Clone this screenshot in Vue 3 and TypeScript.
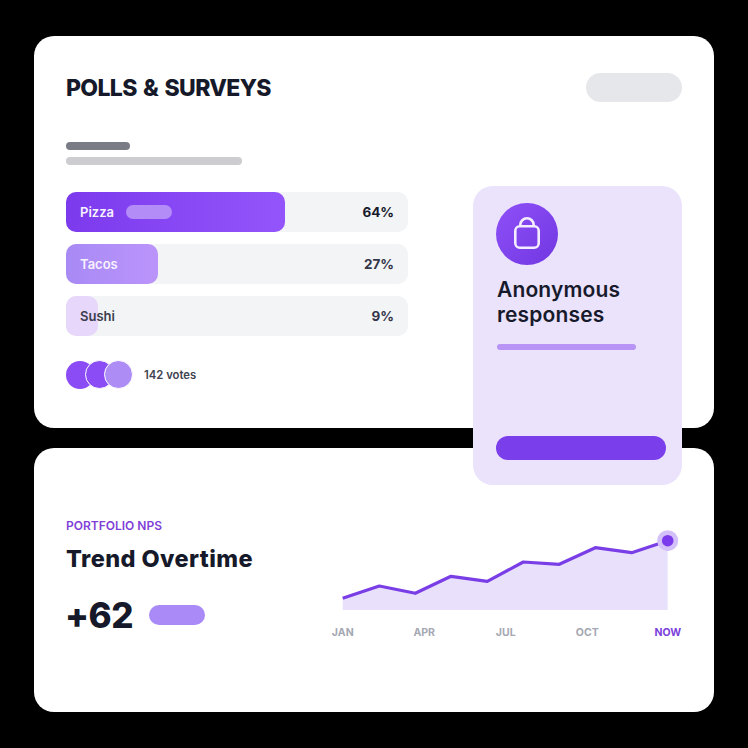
<script setup lang="ts">
const polls = [
  { name: 'Pizza', value: '64%', width: 219, cls: 'first' },
  { name: 'Tacos', value: '27%', width: 92, cls: 'second' },
  { name: 'Sushi', value: '9%', width: 32, cls: 'third' },
]
const months = ['JAN', 'APR', 'JUL', 'OCT', 'NOW']
const pts = '12.7,73.3 49.3,61 85.3,68.3 121,51.3 157.3,56.3 193.3,37 229.3,39.3 265.3,22.7 301.7,27.7 337.7,15.7'
</script>

<template>
  <main class="page">
    <section class="card top">
      <header class="head">
        <h1>POLLS &amp; SURVEYS</h1>
        <div class="pill-grey"></div>
      </header>
      <div class="line-dark"></div>
      <div class="line-light"></div>
      <div class="polls">
        <div v-for="p in polls" :key="p.name" class="row">
          <div class="fill" :class="p.cls" :style="{ width: p.width + 'px' }"></div>
          <span class="name" :class="p.cls">{{ p.name }}</span>
          <span v-if="p.cls === 'first'" class="chip"></span>
          <span class="val" :class="p.cls">{{ p.value }}</span>
        </div>
      </div>
      <div class="votes">
        <div class="avatars">
          <i class="av a1"></i><i class="av a2"></i><i class="av a3"></i>
        </div>
        <span>142 votes</span>
      </div>
    </section>

    <section class="card bottom">
      <div class="left">
        <div class="eyebrow">PORTFOLIO NPS</div>
        <h2>Trend Overtime</h2>
        <div class="score">
          <strong>+62</strong>
          <span class="score-pill"></span>
        </div>
      </div>
      <div class="chart">
        <svg width="350" height="90" viewBox="0 0 350 90">
          <polygon :points="pts + ' 337.7,85 12.7,85'" fill="#e9e1fc" />
          <polyline :points="pts" fill="none" stroke="#7a3ee6" stroke-width="3.2" stroke-linejoin="round" />
          <circle cx="337.7" cy="15.7" r="10.5" fill="#d3c0f8" />
          <circle cx="337.7" cy="15.7" r="5.8" fill="#7c3aed" />
        </svg>
        <div class="months">
          <span v-for="m in months" :key="m" :class="{ now: m === 'NOW' }">{{ m }}</span>
        </div>
      </div>
    </section>

    <aside class="float">
      <div class="lock">
        <svg width="30" height="36" viewBox="0 0 30 36" fill="none" stroke="#f3edff" stroke-width="2.6">
          <rect x="3.3" y="10.3" width="23.4" height="21.4" rx="4.5" />
          <path d="M8.3 10.3V9a6.7 6.7 0 0 1 13.4 0v1.3" />
        </svg>
      </div>
      <h3>Anonymous<br />responses</h3>
      <div class="float-line"></div>
      <div class="float-btn"></div>
    </aside>
  </main>
</template>

<style>
html, body { margin: 0; background: #000; }
</style>

<style scoped>
.page {
  position: relative;
  box-sizing: border-box;
  width: 748px;
  height: 748px;
  padding: 36px 34px;
  display: flex;
  flex-direction: column;
  gap: 20px;
  background: #000;
  font-family: Inter, "Liberation Sans", sans-serif;
  color: #171a2b;
}
.card { background: #fff; border-radius: 20px; box-sizing: border-box; }
.top { height: 392px; padding: 37px 32px 0; }
.head { display: flex; justify-content: space-between; align-items: center; height: 29px; }
h1 { margin: 0; font-size: 23px; font-weight: 800; letter-spacing: -0.65px; word-spacing: 2px; color: #151929; }
.pill-grey { width: 96px; height: 29px; border-radius: 15px; background: #e5e7eb; }
.line-dark { width: 64px; height: 8px; border-radius: 4px; background: #7a7c85; margin-top: 40px; }
.line-light { width: 176px; height: 8px; border-radius: 4px; background: #cdcdd1; margin-top: 7px; }
.polls { display: flex; flex-direction: column; gap: 12px; margin-top: 27px; width: 342px; }
.row {
  position: relative;
  height: 40px;
  border-radius: 10px;
  background: #f3f4f6;
  display: flex;
  align-items: center;
  padding: 0 14px;
  font-size: 13px;
  font-weight: 600;
}
.fill { position: absolute; left: 0; top: 0; bottom: 0; border-radius: 10px; }
.fill.first { background: linear-gradient(90deg, #7c3aed, #9355fb); }
.fill.second { background: linear-gradient(90deg, #a88af5, #bb94fb); }
.fill.third { background: #e7d7fb; }
.name { position: relative; color: #f7f2ff; }
.name.third { color: #3a3d4d; }
.chip { position: relative; width: 46px; height: 14px; border-radius: 7px; background: #b48cf8; margin-left: 12px; }
.val { position: relative; margin-left: auto; font-size: 13.5px; font-weight: 700; color: #34374a; }
.val.first { color: #171a2b; }
.votes { display: flex; align-items: center; gap: 11px; margin-top: 24px; font-size: 11.3px; font-weight: 600; color: #3f4250; }
.avatars { display: flex; align-items: center; }
.av { width: 28px; height: 28px; border-radius: 50%; box-sizing: border-box; display: block; }
.av + .av { margin-left: -9.5px; border: 1.5px solid #fff; width: 29px; height: 29px; }
.a1, .a2 { background: #8b4cf6; }
.a3 { background: #ad8cf6; }
.bottom { height: 264px; padding: 0 32px; display: flex; }
.left { width: 264px; padding-top: 71px; }
.eyebrow { font-size: 12px; line-height: 14px; font-weight: 600; color: #7f3fd8; }
h2 { margin: 12px 0 0; font-size: 23.5px; line-height: 28px; font-weight: 800; letter-spacing: 0.42px; color: #151929; }
.score { display: flex; align-items: center; gap: 16px; margin-top: 21px; }
.score strong { font-size: 35px; line-height: 42px; font-weight: 800; letter-spacing: -0.5px; margin-left: -1px; color: #151929; }
.score-pill { width: 56px; height: 20px; border-radius: 10px; background: #a98af6; }
.chart { width: 350px; padding-top: 77px; }
.chart svg { display: block; }
.months {
  display: grid;
  grid-template-columns: repeat(5, 81.5px);
  justify-items: center;
  margin: 11px 0 0 -28px;
  font-size: 10.5px;
  line-height: 13px;
  font-weight: 700;
  color: #a5a8b3;
}
.months .now { color: #7c3fdc; margin-right: 2px; }
.float {
  position: absolute;
  left: 473px;
  top: 186px;
  width: 209px;
  height: 299px;
  box-sizing: border-box;
  padding: 17px 16px 0 23px;
  border-radius: 20px;
  background: #ebe3fc;
  display: flex;
  flex-direction: column;
}
.lock {
  width: 62px;
  height: 62px;
  border-radius: 50%;
  background: linear-gradient(135deg, #8e50f8, #7237e2);
  display: flex;
  align-items: center;
  justify-content: center;
}
h3 { margin: 12px 0 0 1px; font-size: 21px; line-height: 25px; font-weight: 600; letter-spacing: 0.15px; color: #171a2b; }
.float-line { width: 139px; height: 6px; border-radius: 3px; background: #b794f6; margin: 17px 0 0 1px; }
.float-btn { height: 24px; border-radius: 12px; background: #7a3eea; margin-top: 86px; }
</style>
